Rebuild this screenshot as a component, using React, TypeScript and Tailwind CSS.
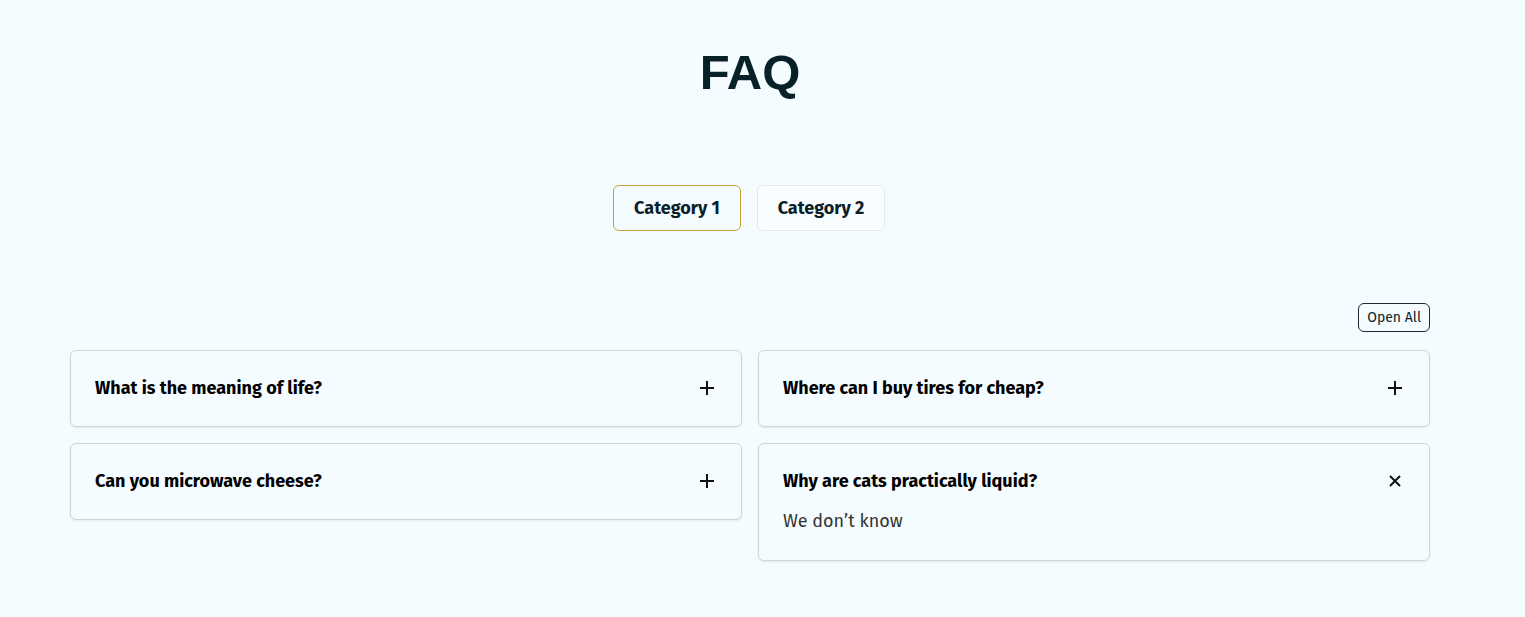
import { useState } from 'react'

type Item = { q: string; a: string }

const left: Item[] = [
  { q: 'What is the meaning of life?', a: '42' },
  { q: 'Can you microwave cheese?', a: 'Yes, but carefully' },
]

const right: Item[] = [
  { q: 'Where can I buy tires for cheap?', a: 'Try a local shop' },
  { q: 'Why are cats practically liquid?', a: 'We don\u2019t know' },
]

function PlusIcon({ open }: { open: boolean }) {
  return open ? (
    <svg width="14" height="14" viewBox="0 0 14 14" fill="none" stroke="#111" strokeWidth="2">
      <path d="M2 2 L12 12 M12 2 L2 12" />
    </svg>
  ) : (
    <svg width="16" height="16" viewBox="0 0 16 16" fill="none" stroke="#111" strokeWidth="2">
      <path d="M8 1 V15 M1 8 H15" />
    </svg>
  )
}

function Card({ item, open, onToggle }: { item: Item; open: boolean; onToggle: () => void }) {
  return (
    <div className="rounded-md border border-[#cfd4d8] bg-[#f5fcff] shadow-[0_1px_2px_rgba(0,0,0,0.08)]">
      <button
        onClick={onToggle}
        className="flex w-full items-center justify-between px-6 pt-[27px] pb-[28px] text-left"
      >
        <span className="text-[18px] font-bold leading-[20px] text-black">{item.q}</span>
        <span className="mr-[2px] flex h-4 w-4 items-center justify-center">
          <PlusIcon open={open} />
        </span>
      </button>
      {open && (
        <p className="-mt-[8px] px-6 pb-[29px] text-[18px] leading-[20px] text-[#333]">{item.a}</p>
      )}
    </div>
  )
}

export default function App() {
  const [tab, setTab] = useState(1)
  const [open, setOpen] = useState<Record<string, boolean>>({ 'r1': true })

  const toggle = (k: string) => setOpen((o) => ({ ...o, [k]: !o[k] }))

  return (
    <div
      className="min-h-[617px] bg-[#f5fcff] pl-[70px] pr-[95px]"
      style={{ fontFamily: '"Fira Sans", Lato, "Noto Sans", sans-serif' }}
    >
      <h1
        className="pt-[42px] text-center text-[49px] font-bold leading-[60px] text-[#082129]"
        style={{ fontFamily: '"Liberation Sans", Arial, sans-serif' }}
      >
        FAQ
      </h1>

      <div className="mt-[83px] flex justify-center gap-4 pr-[2px]">
        {[1, 2].map((n) => (
          <button
            key={n}
            onClick={() => setTab(n)}
            className={`h-[46px] w-[128px] rounded-md border text-[18px] font-bold text-[#0a1f29] ${
              tab === n ? 'border-[#c7a23a]' : 'border-[#e3e8ec] bg-white/40'
            }`}
          >
            Category {n}
          </button>
        ))}
      </div>

      <div className="mt-[72px] flex justify-end">
        <button className="h-[29px] rounded-md border border-[#1b2a33] px-2 text-[14px] leading-none text-[#0a1f29]">
          Open All
        </button>
      </div>

      <div className="mt-[18px] grid grid-cols-2 items-start gap-x-4">
        <div className="flex flex-col gap-4">
          {left.map((it, i) => (
            <Card key={i} item={it} open={!!open['l' + i]} onToggle={() => toggle('l' + i)} />
          ))}
        </div>
        <div className="flex flex-col gap-4">
          {right.map((it, i) => (
            <Card key={i} item={it} open={!!open['r' + i]} onToggle={() => toggle('r' + i)} />
          ))}
        </div>
      </div>
    </div>
  )
}
